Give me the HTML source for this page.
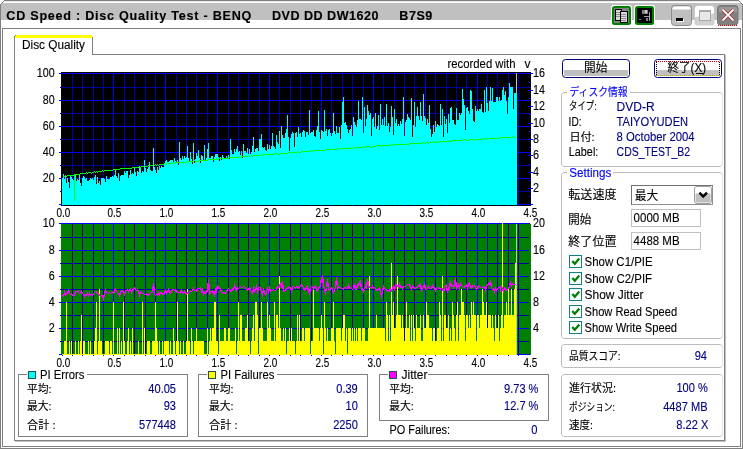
<!DOCTYPE html>
<html><head><meta charset="utf-8"><title>CD Speed : Disc Quality Test</title>
<style>html,body{margin:0;padding:0;background:#fff;overflow:hidden}svg{display:block;will-change:transform}text{white-space:pre;stroke:#000;stroke-width:.12px}.n{fill:#000080;stroke:#000080}.b{fill:#00f;stroke:#00f}</style></head>
<body>
<svg width="743" height="449" viewBox="0 0 743 449" font-family="'Liberation Sans', 'Noto Sans CJK JP', sans-serif" font-size="12.5" shape-rendering="crispEdges">
<rect x="0" y="0" width="743" height="449" fill="#fff"/>
<rect x="1" y="3" width="741" height="17" fill="#c0c0c0"/>
<rect x="4" y="0" width="735" height="1" fill="#808080"/>
<rect x="3" y="1" width="737" height="1" fill="#ececec"/>
<rect x="2" y="2" width="739" height="1" fill="#fff"/>
<rect x="0" y="4" width="1" height="445" fill="#808080"/>
<rect x="742" y="4" width="1" height="445" fill="#808080"/>
<rect x="0" y="448" width="743" height="1" fill="#808080"/>
<path d="M0 0H4V1H3V2H2V3H1V4H0Z M743 0H739V1H740V2H741V3H742V4H743Z" fill="#fff"/>
<path d="M0.5 4.5L4.5 0.5" fill="none" stroke="#808080" shape-rendering="auto"/>
<path d="M742.5 4.5L738.5 0.5" fill="none" stroke="#808080" shape-rendering="auto"/>
<rect x="2" y="28" width="739" height="1" fill="#808080"/>
<rect x="2" y="28" width="1" height="419" fill="#808080"/>
<rect x="740" y="28" width="1" height="419" fill="#808080"/>
<rect x="2" y="446" width="739" height="1" fill="#808080"/>
<text x="6.3" y="19.6" textLength="245.0" lengthAdjust="spacing" font-weight="bold" font-size="12.6">CD Speed : Disc Quality Test - BENQ</text>
<text x="272" y="19.6" textLength="106.5" lengthAdjust="spacing" font-weight="bold" font-size="12.6">DVD DD DW1620</text>
<text x="399.3" y="19.6" textLength="33.0" lengthAdjust="spacing" font-weight="bold" font-size="12.6">B7S9</text>
<rect x="611" y="5" width="21" height="21" rx="3" fill="#fff" shape-rendering="auto"/>
<rect x="612" y="6" width="19" height="19" rx="2.5" fill="#008000" shape-rendering="auto"/>
<rect x="614" y="8" width="15" height="15" fill="#808080"/>
<rect x="615" y="9" width="6" height="11" fill="#d8d8d8" stroke="#000" stroke-width="1"/>
<rect x="616" y="12" width="4" height="1" fill="#909090"/>
<rect x="616" y="14" width="4" height="1" fill="#909090"/>
<rect x="616" y="16" width="4" height="1" fill="#909090"/>
<rect x="620" y="11" width="7" height="11" fill="#d8d8d8" stroke="#000" stroke-width="1"/>
<rect x="621" y="14" width="5" height="1" fill="#909090"/>
<rect x="621" y="16" width="5" height="1" fill="#909090"/>
<rect x="621" y="18" width="5" height="1" fill="#909090"/>
<rect x="621" y="20" width="5" height="1" fill="#909090"/>
<rect x="634" y="5" width="21" height="21" rx="3" fill="#fff" shape-rendering="auto"/>
<rect x="635" y="6" width="19" height="19" rx="2.5" fill="#008000" shape-rendering="auto"/>
<rect x="637" y="8" width="15" height="15" fill="#000"/>
<rect x="642" y="10" width="6" height="4" fill="#808080"/>
<rect x="645" y="10" width="2" height="3" fill="#d0d0d0"/>
<rect x="649" y="12" width="1" height="9" fill="#a0a0a0"/>
<rect x="644" y="16" width="6" height="1" fill="#a0a0a0"/>
<rect x="646" y="18" width="2" height="3" fill="#808080"/>
<rect x="639" y="19" width="2" height="1" fill="#808080"/>
<rect x="671.5" y="5.5" width="20" height="20" rx="3" fill="#c0c0c0" stroke="#8c8c8c" shape-rendering="auto"/>
<path d="M672.5 9.5V8.5Q672.5 6.5 675 6.5H688Q690.5 6.5 690.5 8.5V9.5Z" fill="#fff" shape-rendering="auto"/>
<rect x="677" y="19" width="7" height="3" fill="#fff"/>
<rect x="676" y="18" width="7" height="3" fill="#000"/>
<rect x="694.5" y="5.5" width="20" height="20" rx="3" fill="#d0d0d0" shape-rendering="auto"/>
<path d="M695 17V9Q695 6 698 6H711Q714 6 714 9V13Q706 16.5 695 17Z" fill="#fff" shape-rendering="auto"/>
<rect x="699" y="10" width="11" height="10" fill="#e8e8e8" stroke="#a8a8a8" stroke-width="1"/>
<rect x="699" y="10" width="11" height="2" fill="#a8a8a8"/>
<rect x="717.5" y="5.5" width="20.5" height="19.5" rx="3" fill="#808080" stroke="#787878" shape-rendering="auto"/>
<path d="M719 12V9Q719 7 721 7H735Q737 7 737 9V12Z" fill="#9a9a9a" shape-rendering="auto"/>
<path d="M722.5 9.5L733.5 20.5M733.5 9.5L722.5 20.5" stroke="#a00000" stroke-width="3" fill="none" shape-rendering="auto"/>
<path d="M722.5 9.5L733.5 20.5M733.5 9.5L722.5 20.5" stroke="#fff" stroke-width="1.8" fill="none" shape-rendering="auto"/>
<path d="M718 25.5H738" stroke="#c00000" stroke-dasharray="1 1" fill="none"/>
<rect x="92" y="54" width="633" height="1" fill="#808080"/>
<rect x="14" y="37" width="1" height="404" fill="#808080"/>
<rect x="724" y="54" width="1" height="387" fill="#808080"/>
<rect x="725" y="55" width="1" height="387" fill="#c0c0c0"/>
<rect x="14" y="440" width="711" height="1" fill="#808080"/>
<rect x="15" y="441" width="711" height="1" fill="#c0c0c0"/>
<rect x="15" y="35" width="77" height="3" fill="#ffff00"/>
<path d="M14 37h1v-1h1v-1h-1v1h-1z" fill="#808080"/>
<rect x="92" y="37" width="1" height="18" fill="#808080"/>
<text x="22" y="48.8" textLength="63.0" lengthAdjust="spacingAndGlyphs">Disc Quality</text>
<rect x="61" y="72" width="470" height="134" fill="#000"/>
<rect x="72" y="73" width="1" height="133" fill="#0000a0"/>
<rect x="82" y="73" width="1" height="133" fill="#0000a0"/>
<rect x="93" y="73" width="1" height="133" fill="#0000a0"/>
<rect x="103" y="73" width="1" height="133" fill="#0000a0"/>
<rect x="113" y="73" width="1" height="133" fill="#0000ff"/>
<rect x="124" y="73" width="1" height="133" fill="#0000a0"/>
<rect x="134" y="73" width="1" height="133" fill="#0000a0"/>
<rect x="145" y="73" width="1" height="133" fill="#0000a0"/>
<rect x="155" y="73" width="1" height="133" fill="#0000a0"/>
<rect x="165" y="73" width="1" height="133" fill="#0000ff"/>
<rect x="176" y="73" width="1" height="133" fill="#0000a0"/>
<rect x="186" y="73" width="1" height="133" fill="#0000a0"/>
<rect x="196" y="73" width="1" height="133" fill="#0000a0"/>
<rect x="207" y="73" width="1" height="133" fill="#0000a0"/>
<rect x="217" y="73" width="1" height="133" fill="#0000ff"/>
<rect x="228" y="73" width="1" height="133" fill="#0000a0"/>
<rect x="238" y="73" width="1" height="133" fill="#0000a0"/>
<rect x="248" y="73" width="1" height="133" fill="#0000a0"/>
<rect x="259" y="73" width="1" height="133" fill="#0000a0"/>
<rect x="269" y="73" width="1" height="133" fill="#0000ff"/>
<rect x="279" y="73" width="1" height="133" fill="#0000a0"/>
<rect x="290" y="73" width="1" height="133" fill="#0000a0"/>
<rect x="300" y="73" width="1" height="133" fill="#0000a0"/>
<rect x="311" y="73" width="1" height="133" fill="#0000a0"/>
<rect x="321" y="73" width="1" height="133" fill="#0000ff"/>
<rect x="331" y="73" width="1" height="133" fill="#0000a0"/>
<rect x="342" y="73" width="1" height="133" fill="#0000a0"/>
<rect x="352" y="73" width="1" height="133" fill="#0000a0"/>
<rect x="363" y="73" width="1" height="133" fill="#0000a0"/>
<rect x="373" y="73" width="1" height="133" fill="#0000ff"/>
<rect x="383" y="73" width="1" height="133" fill="#0000a0"/>
<rect x="394" y="73" width="1" height="133" fill="#0000a0"/>
<rect x="404" y="73" width="1" height="133" fill="#0000a0"/>
<rect x="414" y="73" width="1" height="133" fill="#0000a0"/>
<rect x="425" y="73" width="1" height="133" fill="#0000ff"/>
<rect x="435" y="73" width="1" height="133" fill="#0000a0"/>
<rect x="446" y="73" width="1" height="133" fill="#0000a0"/>
<rect x="456" y="73" width="1" height="133" fill="#0000a0"/>
<rect x="466" y="73" width="1" height="133" fill="#0000a0"/>
<rect x="477" y="73" width="1" height="133" fill="#0000ff"/>
<rect x="487" y="73" width="1" height="133" fill="#0000a0"/>
<rect x="497" y="73" width="1" height="133" fill="#0000a0"/>
<rect x="508" y="73" width="1" height="133" fill="#0000a0"/>
<rect x="518" y="73" width="1" height="133" fill="#0000a0"/>
<rect x="59" y="204" width="472" height="1" fill="#0000ff"/>
<rect x="60" y="191" width="471" height="1" fill="#0000a0"/>
<rect x="59" y="178" width="472" height="1" fill="#0000ff"/>
<rect x="60" y="165" width="471" height="1" fill="#0000a0"/>
<rect x="59" y="152" width="472" height="1" fill="#0000ff"/>
<rect x="60" y="139" width="471" height="1" fill="#0000a0"/>
<rect x="59" y="126" width="472" height="1" fill="#0000ff"/>
<rect x="60" y="113" width="471" height="1" fill="#0000a0"/>
<rect x="59" y="100" width="472" height="1" fill="#0000ff"/>
<rect x="60" y="87" width="471" height="1" fill="#0000a0"/>
<rect x="59" y="73" width="472" height="1" fill="#0000ff"/>
<rect x="528" y="204" width="5" height="1" fill="#0000ff"/>
<rect x="529" y="196" width="2" height="1" fill="#0000ff"/>
<rect x="528" y="188" width="5" height="1" fill="#0000ff"/>
<rect x="529" y="180" width="2" height="1" fill="#0000ff"/>
<rect x="528" y="172" width="5" height="1" fill="#0000ff"/>
<rect x="529" y="164" width="2" height="1" fill="#0000ff"/>
<rect x="528" y="155" width="5" height="1" fill="#0000ff"/>
<rect x="529" y="147" width="2" height="1" fill="#0000ff"/>
<rect x="528" y="139" width="5" height="1" fill="#0000ff"/>
<rect x="529" y="131" width="2" height="1" fill="#0000ff"/>
<rect x="528" y="123" width="5" height="1" fill="#0000ff"/>
<rect x="529" y="114" width="2" height="1" fill="#0000ff"/>
<rect x="528" y="106" width="5" height="1" fill="#0000ff"/>
<rect x="529" y="98" width="2" height="1" fill="#0000ff"/>
<rect x="528" y="90" width="5" height="1" fill="#0000ff"/>
<rect x="529" y="82" width="2" height="1" fill="#0000ff"/>
<rect x="528" y="73" width="5" height="1" fill="#0000ff"/>
<rect x="59" y="204" width="474" height="1" fill="#0000ff"/>
<path d="M62 205V178h1V174h1V179h1V176h1V183h1V178h1V182h1V188h1V176h1V177h1V179h1V180h1V181h1V174h1V181h1V179h1V180h1V174h1V183h1V186h1V178h1V176h1V177h1V179h1V178h1V181h1V181h1V180h1V178h1V179h1V178h1V180h1V177h1V175h1V184h1V177h1V183h1V181h1V185h1V178h1V178h1V178h1V179h1V182h1V176h1V179h1V179h1V179h1V177h1V177h1V176h1V177h1V175h1V170h1V176h1V178h1V173h1V181h1V176h1V175h1V175h1V175h1V171h1V173h1V171h1V171h1V178h1V175h1V170h1V174h1V173h1V174h1V167h1V172h1V176h1V171h1V172h1V167h1V168h1V173h1V171h1V172h1V160h1V168h1V172h1V169h1V167h1V162h1V170h1V171h1V171h1V148h1V167h1V170h1V173h1V167h1V170h1V166h1V168h1V166h1V167h1V167h1V163h1V161h1V160h1V162h1V162h1V161h1V160h1V160h1V160h1V163h1V158h1V161h1V163h1V160h1V165h1V142h1V158h1V160h1V156h1V159h1V156h1V158h1V157h1V146h1V158h1V162h1V152h1V159h1V164h1V143h1V163h1V159h1V153h1V156h1V150h1V158h1V163h1V155h1V156h1V160h1V145h1V161h1V158h1V149h1V143h1V158h1V158h1V156h1V156h1V162h1V157h1V154h1V154h1V154h1V157h1V161h1V157h1V160h1V155h1V157h1V159h1V158h1V156h1V158h1V155h1V159h1V139h1V150h1V154h1V154h1V149h1V152h1V149h1V146h1V152h1V151h1V155h1V151h1V158h1V144h1V151h1V151h1V153h1V148h1V154h1V149h1V154h1V152h1V146h1V137h1V152h1V149h1V148h1V148h1V151h1V139h1V139h1V134h1V147h1V148h1V147h1V150h1V151h1V144h1V149h1V145h1V149h1V146h1V133h1V146h1V147h1V149h1V135h1V142h1V144h1V131h1V148h1V126h1V135h1V138h1V138h1V133h1V129h1V115h1V137h1V151h1V138h1V134h1V132h1V133h1V147h1V133h1V132h1V137h1V127h1V134h1V133h1V137h1V132h1V130h1V131h1V137h1V132h1V132h1V135h1V110h1V133h1V132h1V132h1V130h1V136h1V137h1V130h1V126h1V111h1V132h1V139h1V130h1V131h1V132h1V110h1V131h1V129h1V136h1V130h1V129h1V133h1V136h1V133h1V113h1V131h1V134h1V126h1V133h1V133h1V127h1V139h1V125h1V102h1V97h1V123h1V122h1V125h1V129h1V133h1V130h1V129h1V125h1V136h1V117h1V122h1V125h1V127h1V120h1V101h1V119h1V119h1V120h1V97h1V133h1V107h1V126h1V119h1V105h1V111h1V115h1V113h1V136h1V119h1V117h1V127h1V113h1V129h1V126h1V115h1V130h1V104h1V125h1V119h1V125h1V117h1V126h1V104h1V126h1V123h1V132h1V127h1V106h1V117h1V135h1V109h1V123h1V119h1V126h1V124h1V126h1V121h1V124h1V119h1V97h1V136h1V122h1V120h1V114h1V117h1V118h1V120h1V98h1V137h1V125h1V102h1V127h1V116h1V107h1V116h1V120h1V102h1V116h1V121h1V94h1V116h1V118h1V125h1V119h1V123h1V105h1V129h1V137h1V134h1V125h1V132h1V121h1V127h1V124h1V125h1V126h1V104h1V125h1V109h1V137h1V116h1V124h1V119h1V133h1V114h1V123h1V108h1V107h1V120h1V120h1V124h1V125h1V108h1V120h1V120h1V113h1V115h1V113h1V89h1V99h1V105h1V130h1V108h1V107h1V111h1V114h1V90h1V91h1V109h1V121h1V122h1V106h1V111h1V109h1V111h1V109h1V109h1V104h1V112h1V113h1V90h1V112h1V87h1V103h1V111h1V101h1V87h1V101h1V88h1V102h1V102h1V102h1V97h1V97h1V101h1V97h1V101h1V100h1V90h1V87h1V95h1V91h1V101h1V114h1V97h1V83h1V87h1V87h1V87h1V109h1V93h1V93h1V93h1V205Z" fill="#00ffff"/>
<rect x="516" y="73" width="1" height="20" fill="#c0c0c0"/>
<rect x="61" y="205" width="470" height="1" fill="#000"/>
<rect x="62" y="205" width="1" height="1" fill="#0000ff"/>
<rect x="72" y="205" width="1" height="1" fill="#0000ff"/>
<rect x="82" y="205" width="1" height="1" fill="#0000ff"/>
<rect x="93" y="205" width="1" height="1" fill="#0000ff"/>
<rect x="103" y="205" width="1" height="1" fill="#0000ff"/>
<rect x="113" y="205" width="1" height="1" fill="#0000ff"/>
<rect x="124" y="205" width="1" height="1" fill="#0000ff"/>
<rect x="134" y="205" width="1" height="1" fill="#0000ff"/>
<rect x="145" y="205" width="1" height="1" fill="#0000ff"/>
<rect x="155" y="205" width="1" height="1" fill="#0000ff"/>
<rect x="165" y="205" width="1" height="1" fill="#0000ff"/>
<rect x="176" y="205" width="1" height="1" fill="#0000ff"/>
<rect x="186" y="205" width="1" height="1" fill="#0000ff"/>
<rect x="196" y="205" width="1" height="1" fill="#0000ff"/>
<rect x="207" y="205" width="1" height="1" fill="#0000ff"/>
<rect x="217" y="205" width="1" height="1" fill="#0000ff"/>
<rect x="228" y="205" width="1" height="1" fill="#0000ff"/>
<rect x="238" y="205" width="1" height="1" fill="#0000ff"/>
<rect x="248" y="205" width="1" height="1" fill="#0000ff"/>
<rect x="259" y="205" width="1" height="1" fill="#0000ff"/>
<rect x="269" y="205" width="1" height="1" fill="#0000ff"/>
<rect x="279" y="205" width="1" height="1" fill="#0000ff"/>
<rect x="290" y="205" width="1" height="1" fill="#0000ff"/>
<rect x="300" y="205" width="1" height="1" fill="#0000ff"/>
<rect x="311" y="205" width="1" height="1" fill="#0000ff"/>
<rect x="321" y="205" width="1" height="1" fill="#0000ff"/>
<rect x="331" y="205" width="1" height="1" fill="#0000ff"/>
<rect x="342" y="205" width="1" height="1" fill="#0000ff"/>
<rect x="352" y="205" width="1" height="1" fill="#0000ff"/>
<rect x="363" y="205" width="1" height="1" fill="#0000ff"/>
<rect x="373" y="205" width="1" height="1" fill="#0000ff"/>
<rect x="383" y="205" width="1" height="1" fill="#0000ff"/>
<rect x="394" y="205" width="1" height="1" fill="#0000ff"/>
<rect x="404" y="205" width="1" height="1" fill="#0000ff"/>
<rect x="414" y="205" width="1" height="1" fill="#0000ff"/>
<rect x="425" y="205" width="1" height="1" fill="#0000ff"/>
<rect x="435" y="205" width="1" height="1" fill="#0000ff"/>
<rect x="446" y="205" width="1" height="1" fill="#0000ff"/>
<rect x="456" y="205" width="1" height="1" fill="#0000ff"/>
<rect x="466" y="205" width="1" height="1" fill="#0000ff"/>
<rect x="477" y="205" width="1" height="1" fill="#0000ff"/>
<rect x="487" y="205" width="1" height="1" fill="#0000ff"/>
<rect x="497" y="205" width="1" height="1" fill="#0000ff"/>
<rect x="508" y="205" width="1" height="1" fill="#0000ff"/>
<rect x="518" y="205" width="1" height="1" fill="#0000ff"/>
<path d="M62.5 176.5 63.5 176.5 64.5 176.5 65.5 175.5 66.5 176.5 67.5 175.5 68.5 175.5 69.5 175.5 70.5 175.5 71.5 175.5 72.5 175.5 73.5 175.5 74.5 174.5 75.5 174.5 76.5 174.5 77.5 174.5 78.5 174.5 79.5 174.5 80.5 173.5 81.5 173.5 82.5 173.5 83.5 173.5 84.5 173.5 85.5 173.5 86.5 172.5 87.5 173.5 88.5 172.5 89.5 172.5 90.5 172.5 91.5 173.5 92.5 172.5 93.5 172.5 94.5 171.5 95.5 172.5 96.5 171.5 97.5 172.5 98.5 171.5 99.5 171.5 100.5 171.5 101.5 171.5 102.5 170.5 103.5 171.5 104.5 170.5 105.5 170.5 106.5 170.5 107.5 170.5 108.5 170.5 109.5 170.5 110.5 170.5 111.5 170.5 112.5 170.5 113.5 169.5 114.5 169.5 115.5 169.5 116.5 169.5 117.5 169.5 118.5 169.5 119.5 169.5 120.5 168.5 121.5 168.5 122.5 168.5 123.5 168.5 124.5 168.5 125.5 168.5 126.5 168.5 127.5 168.5 128.5 168.5 129.5 168.5 130.5 168.5 131.5 168.5 132.5 167.5 133.5 167.5 134.5 167.5 135.5 167.5 136.5 167.5 137.5 167.5 138.5 167.5 139.5 166.5 140.5 167.5 141.5 166.5 142.5 166.5 143.5 166.5 144.5 165.5 145.5 166.5 146.5 166.5 147.5 166.5 148.5 165.5 149.5 165.5 150.5 165.5 151.5 165.5 152.5 165.5 153.5 164.5 154.5 165.5 155.5 164.5 156.5 165.5 157.5 164.5 158.5 165.5 159.5 164.5 160.5 164.5 161.5 164.5 162.5 164.5 163.5 164.5 164.5 163.5 165.5 164.5 166.5 164.5 167.5 163.5 168.5 163.5 169.5 163.5 170.5 163.5 171.5 163.5 172.5 163.5 173.5 162.5 174.5 163.5 175.5 162.5 176.5 162.5 177.5 162.5 178.5 162.5 179.5 162.5 180.5 162.5 181.5 162.5 182.5 162.5 183.5 162.5 184.5 162.5 185.5 162.5 186.5 162.5 187.5 161.5 188.5 161.5 189.5 161.5 190.5 161.5 191.5 161.5 192.5 161.5 193.5 161.5 194.5 160.5 195.5 161.5 196.5 161.5 197.5 161.5 198.5 161.5 199.5 160.5 200.5 160.5 201.5 160.5 202.5 160.5 203.5 160.5 204.5 160.5 205.5 160.5 206.5 160.5 207.5 160.5 208.5 159.5 209.5 159.5 210.5 159.5 211.5 159.5 212.5 159.5 213.5 159.5 214.5 159.5 215.5 159.5 216.5 158.5 217.5 159.5 218.5 159.5 219.5 158.5 220.5 158.5 221.5 158.5 222.5 158.5 223.5 158.5 224.5 158.5 225.5 158.5 226.5 158.5 227.5 158.5 228.5 158.5 229.5 157.5 230.5 157.5 231.5 157.5 232.5 157.5 233.5 157.5 234.5 157.5 235.5 157.5 236.5 157.5 237.5 157.5 238.5 157.5 239.5 157.5 240.5 157.5 241.5 156.5 242.5 156.5 243.5 156.5 244.5 156.5 245.5 156.5 246.5 156.5 247.5 156.5 248.5 155.5 249.5 156.5 250.5 156.5 251.5 155.5 252.5 156.5 253.5 155.5 254.5 155.5 255.5 155.5 256.5 155.5 257.5 155.5 258.5 155.5 259.5 155.5 260.5 154.5 261.5 155.5 262.5 155.5 263.5 154.5 264.5 154.5 265.5 154.5 266.5 154.5 267.5 154.5 268.5 154.5 269.5 154.5 270.5 154.5 271.5 154.5 272.5 154.5 273.5 154.5 274.5 153.5 275.5 154.5 276.5 153.5 277.5 153.5 278.5 154.5 279.5 154.5 280.5 153.5 281.5 153.5 282.5 153.5 283.5 153.5 284.5 153.5 285.5 153.5 286.5 153.5 287.5 153.5 288.5 152.5 289.5 152.5 290.5 152.5 291.5 153.5 292.5 152.5 293.5 152.5 294.5 152.5 295.5 152.5 296.5 152.5 297.5 151.5 298.5 152.5 299.5 152.5 300.5 152.5 301.5 151.5 302.5 151.5 303.5 151.5 304.5 151.5 305.5 151.5 306.5 151.5 307.5 151.5 308.5 151.5 309.5 151.5 310.5 151.5 311.5 150.5 312.5 151.5 313.5 150.5 314.5 150.5 315.5 150.5 316.5 150.5 317.5 150.5 318.5 150.5 319.5 150.5 320.5 150.5 321.5 150.5 322.5 150.5 323.5 150.5 324.5 150.5 325.5 150.5 326.5 149.5 327.5 149.5 328.5 149.5 329.5 149.5 330.5 149.5 331.5 149.5 332.5 149.5 333.5 149.5 334.5 149.5 335.5 149.5 336.5 149.5 337.5 148.5 338.5 149.5 339.5 148.5 340.5 148.5 341.5 148.5 342.5 148.5 343.5 148.5 344.5 148.5 345.5 148.5 346.5 148.5 347.5 148.5 348.5 148.5 349.5 148.5 350.5 148.5 351.5 148.5 352.5 148.5 353.5 147.5 354.5 147.5 355.5 148.5 356.5 147.5 357.5 147.5 358.5 147.5 359.5 147.5 360.5 147.5 361.5 147.5 362.5 147.5 363.5 146.5 364.5 147.5 365.5 147.5 366.5 146.5 367.5 146.5 368.5 146.5 369.5 146.5 370.5 147.5 371.5 147.5 372.5 146.5 373.5 146.5 374.5 146.5 375.5 146.5 376.5 145.5 377.5 145.5 378.5 145.5 379.5 145.5 380.5 145.5 381.5 146.5 382.5 145.5 383.5 145.5 384.5 145.5 385.5 145.5 386.5 145.5 387.5 145.5 388.5 145.5 389.5 145.5 390.5 145.5 391.5 144.5 392.5 144.5 393.5 145.5 394.5 144.5 395.5 144.5 396.5 144.5 397.5 144.5 398.5 144.5 399.5 144.5 400.5 144.5 401.5 144.5 402.5 144.5 403.5 144.5 404.5 144.5 405.5 144.5 406.5 144.5 407.5 144.5 408.5 144.5 409.5 143.5 410.5 143.5 411.5 143.5 412.5 143.5 413.5 143.5 414.5 143.5 415.5 143.5 416.5 143.5 417.5 143.5 418.5 143.5 419.5 143.5 420.5 143.5 421.5 143.5 422.5 143.5 423.5 142.5 424.5 142.5 425.5 143.5 426.5 142.5 427.5 142.5 428.5 143.5 429.5 142.5 430.5 142.5 431.5 142.5 432.5 141.5 433.5 142.5 434.5 142.5 435.5 142.5 436.5 141.5 437.5 142.5 438.5 142.5 439.5 141.5 440.5 141.5 441.5 141.5 442.5 141.5 443.5 141.5 444.5 141.5 445.5 141.5 446.5 141.5 447.5 141.5 448.5 141.5 449.5 140.5 450.5 141.5 451.5 141.5 452.5 140.5 453.5 140.5 454.5 140.5 455.5 140.5 456.5 140.5 457.5 140.5 458.5 140.5 459.5 140.5 460.5 140.5 461.5 140.5 462.5 140.5 463.5 139.5 464.5 139.5 465.5 139.5 466.5 140.5 467.5 140.5 468.5 140.5 469.5 139.5 470.5 139.5 471.5 139.5 472.5 139.5 473.5 139.5 474.5 140.5 475.5 139.5 476.5 139.5 477.5 139.5 478.5 139.5 479.5 139.5 480.5 139.5 481.5 139.5 482.5 138.5 483.5 139.5 484.5 138.5 485.5 138.5 486.5 139.5 487.5 138.5 488.5 138.5 489.5 138.5 490.5 138.5 491.5 138.5 492.5 138.5 493.5 138.5 494.5 138.5 495.5 138.5 496.5 138.5 497.5 137.5 498.5 138.5 499.5 138.5 500.5 137.5 501.5 137.5 502.5 137.5 503.5 137.5 504.5 137.5 505.5 137.5 506.5 137.5 507.5 137.5 508.5 137.5 509.5 137.5 510.5 137.5 511.5 137.5 512.5 136.5 513.5 137.5 514.5 137.5 515.5 137.5" fill="none" stroke="#00ff00" stroke-width="1"/>
<rect x="74" y="174" width="1" height="27" fill="#00ff00"/>
<rect x="59" y="223" width="471" height="1" fill="#0000ff"/>
<rect x="61" y="224" width="470" height="131" fill="#008000"/>
<rect x="72" y="224" width="1" height="131" fill="#0000a0"/>
<rect x="82" y="224" width="1" height="131" fill="#0000a0"/>
<rect x="93" y="224" width="1" height="131" fill="#0000a0"/>
<rect x="103" y="224" width="1" height="131" fill="#0000a0"/>
<rect x="113" y="224" width="1" height="131" fill="#0000ff"/>
<rect x="124" y="224" width="1" height="131" fill="#0000a0"/>
<rect x="134" y="224" width="1" height="131" fill="#0000a0"/>
<rect x="145" y="224" width="1" height="131" fill="#0000a0"/>
<rect x="155" y="224" width="1" height="131" fill="#0000a0"/>
<rect x="165" y="224" width="1" height="131" fill="#0000ff"/>
<rect x="176" y="224" width="1" height="131" fill="#0000a0"/>
<rect x="186" y="224" width="1" height="131" fill="#0000a0"/>
<rect x="196" y="224" width="1" height="131" fill="#0000a0"/>
<rect x="207" y="224" width="1" height="131" fill="#0000a0"/>
<rect x="217" y="224" width="1" height="131" fill="#0000ff"/>
<rect x="228" y="224" width="1" height="131" fill="#0000a0"/>
<rect x="238" y="224" width="1" height="131" fill="#0000a0"/>
<rect x="248" y="224" width="1" height="131" fill="#0000a0"/>
<rect x="259" y="224" width="1" height="131" fill="#0000a0"/>
<rect x="269" y="224" width="1" height="131" fill="#0000ff"/>
<rect x="279" y="224" width="1" height="131" fill="#0000a0"/>
<rect x="290" y="224" width="1" height="131" fill="#0000a0"/>
<rect x="300" y="224" width="1" height="131" fill="#0000a0"/>
<rect x="311" y="224" width="1" height="131" fill="#0000a0"/>
<rect x="321" y="224" width="1" height="131" fill="#0000ff"/>
<rect x="331" y="224" width="1" height="131" fill="#0000a0"/>
<rect x="342" y="224" width="1" height="131" fill="#0000a0"/>
<rect x="352" y="224" width="1" height="131" fill="#0000a0"/>
<rect x="363" y="224" width="1" height="131" fill="#0000a0"/>
<rect x="373" y="224" width="1" height="131" fill="#0000ff"/>
<rect x="383" y="224" width="1" height="131" fill="#0000a0"/>
<rect x="394" y="224" width="1" height="131" fill="#0000a0"/>
<rect x="404" y="224" width="1" height="131" fill="#0000a0"/>
<rect x="414" y="224" width="1" height="131" fill="#0000a0"/>
<rect x="425" y="224" width="1" height="131" fill="#0000ff"/>
<rect x="435" y="224" width="1" height="131" fill="#0000a0"/>
<rect x="446" y="224" width="1" height="131" fill="#0000a0"/>
<rect x="456" y="224" width="1" height="131" fill="#0000a0"/>
<rect x="466" y="224" width="1" height="131" fill="#0000a0"/>
<rect x="477" y="224" width="1" height="131" fill="#0000ff"/>
<rect x="487" y="224" width="1" height="131" fill="#0000a0"/>
<rect x="497" y="224" width="1" height="131" fill="#0000a0"/>
<rect x="508" y="224" width="1" height="131" fill="#0000a0"/>
<rect x="518" y="224" width="1" height="131" fill="#0000a0"/>
<rect x="59" y="354" width="470" height="1" fill="#0000ff"/>
<rect x="60" y="341" width="469" height="1" fill="#0000a0"/>
<rect x="59" y="328" width="470" height="1" fill="#0000ff"/>
<rect x="60" y="315" width="469" height="1" fill="#0000a0"/>
<rect x="59" y="302" width="470" height="1" fill="#0000ff"/>
<rect x="60" y="289" width="469" height="1" fill="#0000a0"/>
<rect x="59" y="276" width="470" height="1" fill="#0000ff"/>
<rect x="60" y="263" width="469" height="1" fill="#0000a0"/>
<rect x="59" y="250" width="470" height="1" fill="#0000ff"/>
<rect x="60" y="237" width="469" height="1" fill="#0000a0"/>
<path d="M62 355V354h1V354h1V341h1V341h1V302h1V354h1V354h1V341h1V354h1V341h1V354h1V354h1V354h1V341h1V354h1V354h1V341h1V354h1V341h1V315h1V354h1V341h1V341h1V354h1V354h1V354h1V341h1V354h1V341h1V354h1V354h1V354h1V341h1V328h1V302h1V354h1V341h1V289h1V341h1V341h1V354h1V354h1V354h1V341h1V341h1V341h1V341h1V354h1V341h1V341h1V354h1V302h1V354h1V354h1V354h1V328h1V354h1V328h1V354h1V341h1V354h1V302h1V341h1V354h1V354h1V341h1V328h1V354h1V341h1V354h1V328h1V354h1V354h1V354h1V354h1V354h1V341h1V354h1V354h1V354h1V302h1V354h1V328h1V354h1V354h1V341h1V341h1V341h1V354h1V354h1V341h1V341h1V341h1V302h1V328h1V341h1V354h1V341h1V354h1V354h1V341h1V354h1V341h1V341h1V341h1V341h1V341h1V354h1V341h1V354h1V354h1V328h1V341h1V354h1V341h1V302h1V341h1V354h1V341h1V354h1V354h1V341h1V354h1V354h1V341h1V289h1V341h1V341h1V354h1V328h1V341h1V354h1V341h1V341h1V328h1V341h1V341h1V341h1V341h1V341h1V341h1V341h1V354h1V354h1V354h1V328h1V354h1V341h1V328h1V341h1V328h1V328h1V302h1V302h1V341h1V341h1V354h1V315h1V341h1V341h1V341h1V341h1V328h1V328h1V341h1V341h1V328h1V328h1V341h1V341h1V341h1V341h1V341h1V328h1V354h1V341h1V302h1V341h1V315h1V315h1V341h1V341h1V341h1V328h1V328h1V315h1V341h1V341h1V354h1V341h1V328h1V315h1V341h1V302h1V302h1V315h1V354h1V328h1V328h1V302h1V328h1V341h1V341h1V341h1V341h1V302h1V328h1V315h1V328h1V341h1V341h1V341h1V302h1V341h1V315h1V315h1V328h1V276h1V328h1V341h1V341h1V328h1V341h1V328h1V354h1V341h1V341h1V328h1V341h1V328h1V341h1V341h1V341h1V354h1V341h1V315h1V341h1V315h1V341h1V341h1V328h1V328h1V341h1V328h1V328h1V328h1V328h1V328h1V354h1V341h1V341h1V289h1V328h1V328h1V328h1V328h1V328h1V341h1V328h1V315h1V328h1V354h1V302h1V328h1V341h1V328h1V341h1V341h1V341h1V328h1V328h1V302h1V341h1V354h1V328h1V328h1V328h1V328h1V328h1V341h1V328h1V315h1V315h1V341h1V328h1V354h1V328h1V328h1V328h1V341h1V328h1V341h1V328h1V341h1V328h1V341h1V328h1V328h1V328h1V341h1V328h1V328h1V328h1V341h1V341h1V341h1V328h1V276h1V328h1V328h1V328h1V328h1V328h1V328h1V315h1V328h1V328h1V328h1V328h1V328h1V328h1V328h1V328h1V341h1V302h1V315h1V341h1V315h1V341h1V263h1V315h1V302h1V328h1V328h1V315h1V276h1V315h1V315h1V315h1V328h1V315h1V328h1V341h1V328h1V302h1V328h1V328h1V315h1V341h1V315h1V341h1V315h1V328h1V341h1V315h1V328h1V328h1V328h1V315h1V341h1V341h1V315h1V328h1V328h1V302h1V315h1V315h1V328h1V328h1V328h1V341h1V328h1V328h1V341h1V341h1V328h1V328h1V302h1V315h1V341h1V276h1V341h1V315h1V315h1V328h1V328h1V315h1V341h1V328h1V341h1V302h1V315h1V328h1V341h1V315h1V302h1V341h1V315h1V315h1V289h1V302h1V302h1V315h1V341h1V315h1V315h1V328h1V315h1V328h1V302h1V315h1V302h1V315h1V315h1V341h1V315h1V315h1V328h1V315h1V315h1V289h1V302h1V315h1V315h1V302h1V328h1V315h1V315h1V315h1V328h1V315h1V328h1V341h1V315h1V328h1V328h1V315h1V341h1V328h1V315h1V223h1V328h1V315h1V315h1V302h1V315h1V289h1V315h1V315h1V289h1V315h1V315h1V289h1V263h1V355Z" fill="#ffff00"/>
<rect x="516" y="224" width="1" height="131" fill="#c0c0c0"/>
<rect x="62" y="355" width="1" height="1" fill="#0000ff"/>
<rect x="72" y="355" width="1" height="1" fill="#0000ff"/>
<rect x="82" y="355" width="1" height="1" fill="#0000ff"/>
<rect x="93" y="355" width="1" height="1" fill="#0000ff"/>
<rect x="103" y="355" width="1" height="1" fill="#0000ff"/>
<rect x="113" y="355" width="1" height="1" fill="#0000ff"/>
<rect x="124" y="355" width="1" height="1" fill="#0000ff"/>
<rect x="134" y="355" width="1" height="1" fill="#0000ff"/>
<rect x="145" y="355" width="1" height="1" fill="#0000ff"/>
<rect x="155" y="355" width="1" height="1" fill="#0000ff"/>
<rect x="165" y="355" width="1" height="1" fill="#0000ff"/>
<rect x="176" y="355" width="1" height="1" fill="#0000ff"/>
<rect x="186" y="355" width="1" height="1" fill="#0000ff"/>
<rect x="196" y="355" width="1" height="1" fill="#0000ff"/>
<rect x="207" y="355" width="1" height="1" fill="#0000ff"/>
<rect x="217" y="355" width="1" height="1" fill="#0000ff"/>
<rect x="228" y="355" width="1" height="1" fill="#0000ff"/>
<rect x="238" y="355" width="1" height="1" fill="#0000ff"/>
<rect x="248" y="355" width="1" height="1" fill="#0000ff"/>
<rect x="259" y="355" width="1" height="1" fill="#0000ff"/>
<rect x="269" y="355" width="1" height="1" fill="#0000ff"/>
<rect x="279" y="355" width="1" height="1" fill="#0000ff"/>
<rect x="290" y="355" width="1" height="1" fill="#0000ff"/>
<rect x="300" y="355" width="1" height="1" fill="#0000ff"/>
<rect x="311" y="355" width="1" height="1" fill="#0000ff"/>
<rect x="321" y="355" width="1" height="1" fill="#0000ff"/>
<rect x="331" y="355" width="1" height="1" fill="#0000ff"/>
<rect x="342" y="355" width="1" height="1" fill="#0000ff"/>
<rect x="352" y="355" width="1" height="1" fill="#0000ff"/>
<rect x="363" y="355" width="1" height="1" fill="#0000ff"/>
<rect x="373" y="355" width="1" height="1" fill="#0000ff"/>
<rect x="383" y="355" width="1" height="1" fill="#0000ff"/>
<rect x="394" y="355" width="1" height="1" fill="#0000ff"/>
<rect x="404" y="355" width="1" height="1" fill="#0000ff"/>
<rect x="414" y="355" width="1" height="1" fill="#0000ff"/>
<rect x="425" y="355" width="1" height="1" fill="#0000ff"/>
<rect x="435" y="355" width="1" height="1" fill="#0000ff"/>
<rect x="446" y="355" width="1" height="1" fill="#0000ff"/>
<rect x="456" y="355" width="1" height="1" fill="#0000ff"/>
<rect x="466" y="355" width="1" height="1" fill="#0000ff"/>
<rect x="477" y="355" width="1" height="1" fill="#0000ff"/>
<rect x="487" y="355" width="1" height="1" fill="#0000ff"/>
<rect x="497" y="355" width="1" height="1" fill="#0000ff"/>
<rect x="508" y="355" width="1" height="1" fill="#0000ff"/>
<rect x="518" y="355" width="1" height="1" fill="#0000ff"/>
<rect x="517" y="354" width="13" height="1" fill="#0000ff"/>
<path d="M62.5 295.5 63.5 296.5 64.5 292.5 65.5 295.5 66.5 294.5 67.5 292.5 68.5 290.5 69.5 293.5 70.5 294.5 71.5 293.5 72.5 295.5 73.5 295.5 74.5 295.5 75.5 291.5 76.5 291.5 77.5 290.5 78.5 292.5 79.5 293.5 80.5 293.5 81.5 291.5 82.5 293.5 83.5 294.5 84.5 296.5 85.5 294.5 86.5 295.5 87.5 293.5 88.5 295.5 89.5 293.5 90.5 295.5 91.5 294.5 92.5 295.5 93.5 293.5 94.5 292.5 95.5 291.5 96.5 291.5 97.5 293.5 98.5 293.5 99.5 295.5 100.5 296.5 101.5 295.5 102.5 295.5 103.5 298.5 104.5 293.5 105.5 290.5 106.5 292.5 107.5 293.5 108.5 293.5 109.5 292.5 110.5 293.5 111.5 292.5 112.5 292.5 113.5 293.5 114.5 290.5 115.5 289.5 116.5 291.5 117.5 292.5 118.5 293.5 119.5 295.5 120.5 292.5 121.5 290.5 122.5 290.5 123.5 292.5 124.5 294.5 125.5 290.5 126.5 290.5 127.5 289.5 128.5 291.5 129.5 289.5 130.5 288.5 131.5 292.5 132.5 290.5 133.5 288.5 134.5 287.5 135.5 289.5 136.5 290.5 137.5 289.5 138.5 291.5 139.5 294.5 140.5 291.5 141.5 292.5 142.5 293.5 143.5 293.5 144.5 294.5 145.5 294.5 146.5 293.5 147.5 295.5 148.5 295.5 149.5 293.5 150.5 292.5 151.5 292.5 152.5 292.5 153.5 283.5 154.5 294.5 155.5 295.5 156.5 294.5 157.5 295.5 158.5 292.5 159.5 294.5 160.5 292.5 161.5 292.5 162.5 294.5 163.5 294.5 164.5 292.5 165.5 290.5 166.5 293.5 167.5 291.5 168.5 289.5 169.5 292.5 170.5 293.5 171.5 291.5 172.5 289.5 173.5 289.5 174.5 290.5 175.5 289.5 176.5 292.5 177.5 291.5 178.5 292.5 179.5 292.5 180.5 293.5 181.5 290.5 182.5 292.5 183.5 293.5 184.5 291.5 185.5 293.5 186.5 294.5 187.5 292.5 188.5 293.5 189.5 292.5 190.5 290.5 191.5 291.5 192.5 290.5 193.5 288.5 194.5 290.5 195.5 290.5 196.5 291.5 197.5 288.5 198.5 288.5 199.5 288.5 200.5 287.5 201.5 291.5 202.5 289.5 203.5 294.5 204.5 292.5 205.5 293.5 206.5 290.5 207.5 291.5 208.5 279.5 209.5 294.5 210.5 291.5 211.5 291.5 212.5 290.5 213.5 293.5 214.5 295.5 215.5 289.5 216.5 291.5 217.5 285.5 218.5 288.5 219.5 287.5 220.5 289.5 221.5 291.5 222.5 293.5 223.5 292.5 224.5 293.5 225.5 293.5 226.5 291.5 227.5 289.5 228.5 288.5 229.5 289.5 230.5 291.5 231.5 291.5 232.5 288.5 233.5 289.5 234.5 285.5 235.5 288.5 236.5 290.5 237.5 287.5 238.5 288.5 239.5 287.5 240.5 286.5 241.5 287.5 242.5 287.5 243.5 286.5 244.5 286.5 245.5 287.5 246.5 289.5 247.5 290.5 248.5 288.5 249.5 287.5 250.5 290.5 251.5 291.5 252.5 293.5 253.5 288.5 254.5 291.5 255.5 289.5 256.5 286.5 257.5 291.5 258.5 288.5 259.5 287.5 260.5 287.5 261.5 291.5 262.5 294.5 263.5 289.5 264.5 291.5 265.5 295.5 266.5 291.5 267.5 287.5 268.5 291.5 269.5 288.5 270.5 291.5 271.5 290.5 272.5 290.5 273.5 289.5 274.5 290.5 275.5 290.5 276.5 289.5 277.5 286.5 278.5 287.5 279.5 287.5 280.5 282.5 281.5 287.5 282.5 281.5 283.5 291.5 284.5 291.5 285.5 289.5 286.5 289.5 287.5 287.5 288.5 288.5 289.5 286.5 290.5 287.5 291.5 290.5 292.5 287.5 293.5 286.5 294.5 287.5 295.5 288.5 296.5 286.5 297.5 286.5 298.5 288.5 299.5 287.5 300.5 285.5 301.5 284.5 302.5 286.5 303.5 287.5 304.5 290.5 305.5 289.5 306.5 287.5 307.5 286.5 308.5 292.5 309.5 293.5 310.5 287.5 311.5 286.5 312.5 286.5 313.5 288.5 314.5 286.5 315.5 285.5 316.5 290.5 317.5 291.5 318.5 287.5 319.5 287.5 320.5 285.5 321.5 278.5 322.5 276.5 323.5 285.5 324.5 289.5 325.5 292.5 326.5 287.5 327.5 279.5 328.5 289.5 329.5 290.5 330.5 288.5 331.5 287.5 332.5 289.5 333.5 293.5 334.5 289.5 335.5 288.5 336.5 277.5 337.5 288.5 338.5 286.5 339.5 287.5 340.5 287.5 341.5 288.5 342.5 288.5 343.5 289.5 344.5 287.5 345.5 287.5 346.5 288.5 347.5 288.5 348.5 285.5 349.5 288.5 350.5 287.5 351.5 288.5 352.5 289.5 353.5 288.5 354.5 283.5 355.5 289.5 356.5 289.5 357.5 284.5 358.5 285.5 359.5 282.5 360.5 281.5 361.5 289.5 362.5 288.5 363.5 291.5 364.5 289.5 365.5 285.5 366.5 287.5 367.5 279.5 368.5 285.5 369.5 287.5 370.5 287.5 371.5 288.5 372.5 286.5 373.5 288.5 374.5 287.5 375.5 288.5 376.5 290.5 377.5 290.5 378.5 288.5 379.5 287.5 380.5 292.5 381.5 295.5 382.5 291.5 383.5 286.5 384.5 288.5 385.5 289.5 386.5 289.5 387.5 291.5 388.5 290.5 389.5 291.5 390.5 288.5 391.5 290.5 392.5 288.5 393.5 286.5 394.5 290.5 395.5 284.5 396.5 284.5 397.5 286.5 398.5 287.5 399.5 284.5 400.5 287.5 401.5 286.5 402.5 288.5 403.5 286.5 404.5 286.5 405.5 286.5 406.5 285.5 407.5 284.5 408.5 284.5 409.5 284.5 410.5 287.5 411.5 289.5 412.5 285.5 413.5 286.5 414.5 288.5 415.5 288.5 416.5 287.5 417.5 287.5 418.5 285.5 419.5 286.5 420.5 283.5 421.5 290.5 422.5 288.5 423.5 287.5 424.5 283.5 425.5 289.5 426.5 289.5 427.5 288.5 428.5 286.5 429.5 288.5 430.5 288.5 431.5 288.5 432.5 285.5 433.5 287.5 434.5 287.5 435.5 290.5 436.5 288.5 437.5 287.5 438.5 288.5 439.5 287.5 440.5 289.5 441.5 288.5 442.5 288.5 443.5 292.5 444.5 287.5 445.5 286.5 446.5 285.5 447.5 292.5 448.5 287.5 449.5 288.5 450.5 281.5 451.5 286.5 452.5 285.5 453.5 287.5 454.5 285.5 455.5 278.5 456.5 288.5 457.5 286.5 458.5 284.5 459.5 287.5 460.5 283.5 461.5 285.5 462.5 286.5 463.5 287.5 464.5 287.5 465.5 285.5 466.5 284.5 467.5 287.5 468.5 284.5 469.5 283.5 470.5 287.5 471.5 288.5 472.5 285.5 473.5 285.5 474.5 285.5 475.5 287.5 476.5 289.5 477.5 288.5 478.5 285.5 479.5 286.5 480.5 287.5 481.5 286.5 482.5 287.5 483.5 287.5 484.5 286.5 485.5 289.5 486.5 286.5 487.5 285.5 488.5 283.5 489.5 284.5 490.5 280.5 491.5 288.5 492.5 289.5 493.5 288.5 494.5 291.5 495.5 288.5 496.5 290.5 497.5 288.5 498.5 287.5 499.5 286.5 500.5 289.5 501.5 285.5 502.5 289.5 503.5 291.5 504.5 287.5 505.5 288.5 506.5 290.5 507.5 289.5 508.5 288.5 509.5 286.5 510.5 281.5 511.5 285.5 512.5 283.5 513.5 284.5 514.5 284.5 515.5 284.5" fill="none" stroke="#ff00ff" stroke-width="1.4"/>
<text x="42.8" y="181.6" textLength="11.9" lengthAdjust="spacingAndGlyphs">20</text>
<text x="42.8" y="155.6" textLength="11.9" lengthAdjust="spacingAndGlyphs">40</text>
<text x="42.8" y="129.6" textLength="11.9" lengthAdjust="spacingAndGlyphs">60</text>
<text x="42.8" y="103.6" textLength="11.9" lengthAdjust="spacingAndGlyphs">80</text>
<text x="36.849999999999994" y="76.6" textLength="17.9" lengthAdjust="spacingAndGlyphs">100</text>
<text x="48.74999999999999" y="331.6" textLength="6.0" lengthAdjust="spacingAndGlyphs">2</text>
<text x="48.74999999999999" y="305.6" textLength="6.0" lengthAdjust="spacingAndGlyphs">4</text>
<text x="48.74999999999999" y="279.6" textLength="6.0" lengthAdjust="spacingAndGlyphs">6</text>
<text x="48.74999999999999" y="253.6" textLength="6.0" lengthAdjust="spacingAndGlyphs">8</text>
<text x="42.8" y="226.6" textLength="11.9" lengthAdjust="spacingAndGlyphs">10</text>
<text x="533" y="191.5" textLength="6.0" lengthAdjust="spacingAndGlyphs">2</text>
<text x="533" y="175.5" textLength="6.0" lengthAdjust="spacingAndGlyphs">4</text>
<text x="533" y="158.5" textLength="6.0" lengthAdjust="spacingAndGlyphs">6</text>
<text x="533" y="142.5" textLength="6.0" lengthAdjust="spacingAndGlyphs">8</text>
<text x="533" y="126.5" textLength="11.9" lengthAdjust="spacingAndGlyphs">10</text>
<text x="533" y="109.5" textLength="11.9" lengthAdjust="spacingAndGlyphs">12</text>
<text x="533" y="93.5" textLength="11.9" lengthAdjust="spacingAndGlyphs">14</text>
<text x="533" y="76.5" textLength="11.9" lengthAdjust="spacingAndGlyphs">16</text>
<text x="533" y="331.5" textLength="6.0" lengthAdjust="spacingAndGlyphs">4</text>
<text x="533" y="305.5" textLength="6.0" lengthAdjust="spacingAndGlyphs">8</text>
<text x="533" y="279.5" textLength="11.9" lengthAdjust="spacingAndGlyphs">12</text>
<text x="533" y="253.5" textLength="11.9" lengthAdjust="spacingAndGlyphs">16</text>
<text x="533" y="226.5" textLength="11.9" lengthAdjust="spacingAndGlyphs">20</text>
<text x="56.5" y="217.3" textLength="13.8" lengthAdjust="spacingAndGlyphs">0.0</text>
<text x="56.5" y="367.3" textLength="13.8" lengthAdjust="spacingAndGlyphs">0.0</text>
<text x="107.5" y="217.3" textLength="13.8" lengthAdjust="spacingAndGlyphs">0.5</text>
<text x="107.5" y="367.3" textLength="13.8" lengthAdjust="spacingAndGlyphs">0.5</text>
<text x="159.5" y="217.3" textLength="13.8" lengthAdjust="spacingAndGlyphs">1.0</text>
<text x="159.5" y="367.3" textLength="13.8" lengthAdjust="spacingAndGlyphs">1.0</text>
<text x="211.5" y="217.3" textLength="13.8" lengthAdjust="spacingAndGlyphs">1.5</text>
<text x="211.5" y="367.3" textLength="13.8" lengthAdjust="spacingAndGlyphs">1.5</text>
<text x="263.5" y="217.3" textLength="13.8" lengthAdjust="spacingAndGlyphs">2.0</text>
<text x="263.5" y="367.3" textLength="13.8" lengthAdjust="spacingAndGlyphs">2.0</text>
<text x="315.5" y="217.3" textLength="13.8" lengthAdjust="spacingAndGlyphs">2.5</text>
<text x="315.5" y="367.3" textLength="13.8" lengthAdjust="spacingAndGlyphs">2.5</text>
<text x="367.5" y="217.3" textLength="13.8" lengthAdjust="spacingAndGlyphs">3.0</text>
<text x="367.5" y="367.3" textLength="13.8" lengthAdjust="spacingAndGlyphs">3.0</text>
<text x="419.5" y="217.3" textLength="13.8" lengthAdjust="spacingAndGlyphs">3.5</text>
<text x="419.5" y="367.3" textLength="13.8" lengthAdjust="spacingAndGlyphs">3.5</text>
<text x="471.5" y="217.3" textLength="13.8" lengthAdjust="spacingAndGlyphs">4.0</text>
<text x="471.5" y="367.3" textLength="13.8" lengthAdjust="spacingAndGlyphs">4.0</text>
<text x="523.5" y="217.3" textLength="13.8" lengthAdjust="spacingAndGlyphs">4.5</text>
<text x="523.5" y="367.3" textLength="13.8" lengthAdjust="spacingAndGlyphs">4.5</text>
<text x="447.5" y="67.6" textLength="68.0" lengthAdjust="spacingAndGlyphs">recorded with</text>
<text x="524.5" y="67.6" textLength="6.0" lengthAdjust="spacingAndGlyphs">v</text>
<rect x="18" y="374" width="9" height="1" fill="#808080"/>
<rect x="87" y="374" width="101" height="1" fill="#808080"/>
<rect x="18" y="374" width="1" height="63" fill="#808080"/>
<rect x="187" y="374" width="1" height="63" fill="#808080"/>
<rect x="18" y="436" width="170" height="1" fill="#808080"/>
<rect x="28" y="371" width="8" height="8" fill="#205050"/>
<rect x="29" y="372" width="6" height="6" fill="#00ffff"/>
<text x="40" y="378.6" textLength="44.5" lengthAdjust="spacingAndGlyphs">PI Errors</text>
<rect x="198" y="374" width="9" height="1" fill="#808080"/>
<rect x="277" y="374" width="91" height="1" fill="#808080"/>
<rect x="198" y="374" width="1" height="63" fill="#808080"/>
<rect x="367" y="374" width="1" height="63" fill="#808080"/>
<rect x="198" y="436" width="170" height="1" fill="#808080"/>
<rect x="208" y="371" width="8" height="8" fill="#205050"/>
<rect x="209" y="372" width="6" height="6" fill="#ffff00"/>
<text x="220.5" y="378.6" textLength="54.0" lengthAdjust="spacingAndGlyphs">PI Failures</text>
<rect x="379" y="374" width="9" height="1" fill="#808080"/>
<rect x="428" y="374" width="121" height="1" fill="#808080"/>
<rect x="379" y="374" width="1" height="47" fill="#808080"/>
<rect x="548" y="374" width="1" height="47" fill="#808080"/>
<rect x="379" y="420" width="170" height="1" fill="#808080"/>
<rect x="389" y="371" width="8" height="8" fill="#205050"/>
<rect x="390" y="372" width="6" height="6" fill="#ff00ff"/>
<text x="401.5" y="378.6" textLength="26.0" lengthAdjust="spacingAndGlyphs">Jitter</text>
<text x="27" y="392.9" font-size="11" textLength="24.5" lengthAdjust="spacingAndGlyphs">平均:</text>
<text x="148.31674194335938" y="392.6" textLength="27.7" lengthAdjust="spacingAndGlyphs" class="n">40.05</text>
<text x="27" y="410.4" font-size="11" textLength="24.5" lengthAdjust="spacingAndGlyphs">最大:</text>
<text x="163.69512939453125" y="410.1" textLength="12.3" lengthAdjust="spacingAndGlyphs" class="n">93</text>
<text x="27" y="428.9" font-size="11" textLength="28.5" lengthAdjust="spacingAndGlyphs">合計 :</text>
<text x="139.08538818359375" y="428.6" textLength="36.9" lengthAdjust="spacingAndGlyphs" class="n">577448</text>
<text x="209" y="392.9" font-size="11" textLength="24.5" lengthAdjust="spacingAndGlyphs">平均:</text>
<text x="336.26917724609376" y="392.6" textLength="21.5" lengthAdjust="spacingAndGlyphs" class="n">0.39</text>
<text x="209" y="410.4" font-size="11" textLength="24.5" lengthAdjust="spacingAndGlyphs">最大:</text>
<text x="345.49512939453126" y="410.1" textLength="12.3" lengthAdjust="spacingAndGlyphs" class="n">10</text>
<text x="209" y="428.9" font-size="11" textLength="28.5" lengthAdjust="spacingAndGlyphs">合計 :</text>
<text x="333.1902587890625" y="428.6" textLength="24.6" lengthAdjust="spacingAndGlyphs" class="n">2250</text>
<text x="389.2" y="392.9" font-size="11" textLength="24.5" lengthAdjust="spacingAndGlyphs">平均:</text>
<text x="504.059326171875" y="392.6" textLength="34.4" lengthAdjust="spacingAndGlyphs" class="n">9.73 %</text>
<text x="389.2" y="410.4" font-size="11" textLength="24.5" lengthAdjust="spacingAndGlyphs">最大:</text>
<text x="504.059326171875" y="410.1" textLength="34.4" lengthAdjust="spacingAndGlyphs" class="n">12.7 %</text>
<text x="389.5" y="433.8" textLength="60.5" lengthAdjust="spacingAndGlyphs">PO Failures:</text>
<text x="531.3475646972656" y="433.8" textLength="6.2" lengthAdjust="spacingAndGlyphs" class="n">0</text>
<rect x="562.5" y="59.5" width="67" height="18" rx="3" fill="#fff" stroke="#000080" shape-rendering="auto"/>
<rect x="564" y="70" width="64" height="6" fill="#c0c0c0"/>
<text x="584" y="71.9" font-size="12" textLength="23.3" lengthAdjust="spacingAndGlyphs">開始</text>
<rect x="654.5" y="59.5" width="67" height="18" rx="3" fill="#fff" stroke="#000080" shape-rendering="auto"/>
<rect x="656" y="70" width="64" height="6" fill="#c0c0c0"/>
<path d="M656.5 62V75M719.5 62V75" fill="none" stroke="#000" stroke-dasharray="1 1"/>
<path d="M656 61.5H720" fill="none" stroke="#c00000" stroke-dasharray="1 1"/>
<path d="M656 75.5H720" fill="none" stroke="#b0b000" stroke-dasharray="1 1"/>
<text x="667.5" y="71.9" font-size="12" textLength="38.5" lengthAdjust="spacingAndGlyphs">終了(X)</text>
<rect x="696" y="73" width="7" height="1" fill="#000"/>
<path d="M563.5 92.5L561.5 94.5V164.5L563.5 166.5H720.5L722.5 164.5M563.5 92.5H567M630 92.5H720.5L722.5 94.5" fill="none" stroke="#bcbcbc" shape-rendering="auto"/>
<path d="M722.5 94.5V164.5" fill="none" stroke="#e6e6e6"/>
<text x="569.5" y="95.9" font-size="11" textLength="58.1" lengthAdjust="spacingAndGlyphs" class="b">ディスク情報</text>
<text x="569" y="110.4" font-size="11" textLength="27.5" lengthAdjust="spacingAndGlyphs">タイプ:</text>
<text x="616.6" y="110.7" textLength="38.0" lengthAdjust="spacingAndGlyphs" class="n">DVD-R</text>
<text x="568.6" y="125.7" textLength="13.0" lengthAdjust="spacingAndGlyphs">ID:</text>
<text x="616.6" y="125.7" textLength="71.5" lengthAdjust="spacingAndGlyphs" class="n">TAIYOYUDEN</text>
<text x="569.4" y="140.5" font-size="11" textLength="25.3" lengthAdjust="spacingAndGlyphs">日付:</text>
<text x="616.6" y="140.7" textLength="78.0" lengthAdjust="spacingAndGlyphs" class="n">8 October 2004</text>
<text x="568.8" y="155.7" textLength="29.5" lengthAdjust="spacingAndGlyphs">Label:</text>
<text x="616.6" y="155.7" textLength="73.5" lengthAdjust="spacingAndGlyphs" class="n">CDS_TEST_B2</text>
<path d="M563.5 172.5L561.5 174.5V336.5L563.5 338.5H720.5L722.5 336.5M563.5 172.5H567M613 172.5H720.5L722.5 174.5" fill="none" stroke="#bcbcbc" shape-rendering="auto"/>
<path d="M722.5 174.5V336.5" fill="none" stroke="#e6e6e6"/>
<text x="569.3" y="177" textLength="42.0" lengthAdjust="spacingAndGlyphs" class="b">Settings</text>
<text x="568.3" y="198.6" font-size="12" textLength="48.2" lengthAdjust="spacingAndGlyphs">転送速度</text>
<text x="568.3" y="223.9" font-size="12" textLength="23" lengthAdjust="spacingAndGlyphs">開始</text>
<text x="568.3" y="246" font-size="12" textLength="48.2" lengthAdjust="spacingAndGlyphs">終了位置</text>
<rect x="631" y="185" width="82" height="20" fill="#fff"/>
<rect x="631" y="185" width="82" height="1" fill="#707070"/>
<rect x="631" y="185" width="1" height="20" fill="#707070"/>
<rect x="632" y="204" width="81" height="1" fill="#909090"/>
<rect x="712" y="186" width="1" height="19" fill="#909090"/>
<rect x="694.5" y="186.5" width="17" height="17" rx="2.5" fill="#fff" stroke="#a0a0a0" shape-rendering="auto"/>
<path d="M695.5 193.5H710.5V201Q710.5 202.5 709 202.5H697Q695.5 202.5 695.5 201Z" fill="#c0c0c0" shape-rendering="auto"/>
<path d="M699.4 192.6L703.2 196.6L707 192.6" fill="none" stroke="#000" stroke-width="2.4" shape-rendering="auto"/>
<text x="634.8" y="199.5" font-size="12" textLength="23.5" lengthAdjust="spacingAndGlyphs">最大</text>
<rect x="631.5" y="209.5" width="69" height="17" fill="#fff" stroke="#c0c0c0"/>
<text x="633.6" y="222" textLength="46.0" lengthAdjust="spacingAndGlyphs">0000 MB</text>
<rect x="631.5" y="232.5" width="69" height="17" fill="#fff" stroke="#c0c0c0"/>
<text x="633.6" y="245" textLength="46.0" lengthAdjust="spacingAndGlyphs">4488 MB</text>
<rect x="569.5" y="255.5" width="12" height="12" fill="#fff" stroke="#108080"/>
<path d="M572.3 261L574.8 263.8L579.3 258.6" fill="none" stroke="#008000" stroke-width="2.3" shape-rendering="auto"/>
<text x="584.6" y="266" textLength="68.0" lengthAdjust="spacingAndGlyphs">Show C1/PIE</text>
<rect x="569.5" y="272.5" width="12" height="12" fill="#fff" stroke="#108080"/>
<path d="M572.3 278L574.8 280.8L579.3 275.6" fill="none" stroke="#008000" stroke-width="2.3" shape-rendering="auto"/>
<text x="584.6" y="283" textLength="67.5" lengthAdjust="spacingAndGlyphs">Show C2/PIF</text>
<rect x="569.5" y="288.5" width="12" height="12" fill="#fff" stroke="#108080"/>
<path d="M572.3 294L574.8 296.8L579.3 291.6" fill="none" stroke="#008000" stroke-width="2.3" shape-rendering="auto"/>
<text x="584.6" y="299" textLength="59.0" lengthAdjust="spacingAndGlyphs">Show Jitter</text>
<rect x="569.5" y="305.5" width="12" height="12" fill="#fff" stroke="#108080"/>
<path d="M572.3 311L574.8 313.8L579.3 308.6" fill="none" stroke="#008000" stroke-width="2.3" shape-rendering="auto"/>
<text x="584.6" y="316" textLength="92.5" lengthAdjust="spacingAndGlyphs">Show Read Speed</text>
<rect x="569.5" y="321.5" width="12" height="12" fill="#fff" stroke="#108080"/>
<path d="M572.3 327L574.8 329.8L579.3 324.6" fill="none" stroke="#008000" stroke-width="2.3" shape-rendering="auto"/>
<text x="584.6" y="332" textLength="92.5" lengthAdjust="spacingAndGlyphs">Show Write Speed</text>
<path d="M563.5 344.5L561.5 346.5V365.5L563.5 367.5H720.5L722.5 365.5M563.5 344.5H720.5L722.5 346.5" fill="none" stroke="#bcbcbc" shape-rendering="auto"/>
<path d="M722.5 346.5V365.5" fill="none" stroke="#e6e6e6"/>
<text x="569" y="360.2" font-size="11" textLength="51.5" lengthAdjust="spacingAndGlyphs">品質スコア:</text>
<text x="694.6951293945312" y="360.3" textLength="12.3" lengthAdjust="spacingAndGlyphs" class="n">94</text>
<path d="M563.5 374.5L561.5 376.5V434.5L563.5 436.5H720.5L722.5 434.5M563.5 374.5H720.5L722.5 376.5" fill="none" stroke="#bcbcbc" shape-rendering="auto"/>
<path d="M722.5 376.5V434.5" fill="none" stroke="#e6e6e6"/>
<text x="569" y="392.4" font-size="11" textLength="47" lengthAdjust="spacingAndGlyphs">進行状況:</text>
<text x="569" y="410.7" font-size="11" textLength="46" lengthAdjust="spacingAndGlyphs">ポジション:</text>
<text x="569" y="429.1" font-size="11" textLength="24" lengthAdjust="spacingAndGlyphs">速度:</text>
<text x="676.4328430175781" y="392.3" textLength="31.4" lengthAdjust="spacingAndGlyphs" class="n">100 %</text>
<text x="663.2229919433594" y="411" textLength="44.3" lengthAdjust="spacingAndGlyphs" class="n">4487 MB</text>
<text x="676.3170593261718" y="429" textLength="32.0" lengthAdjust="spacingAndGlyphs" class="n">8.22 X</text>
</svg>
</body></html>
